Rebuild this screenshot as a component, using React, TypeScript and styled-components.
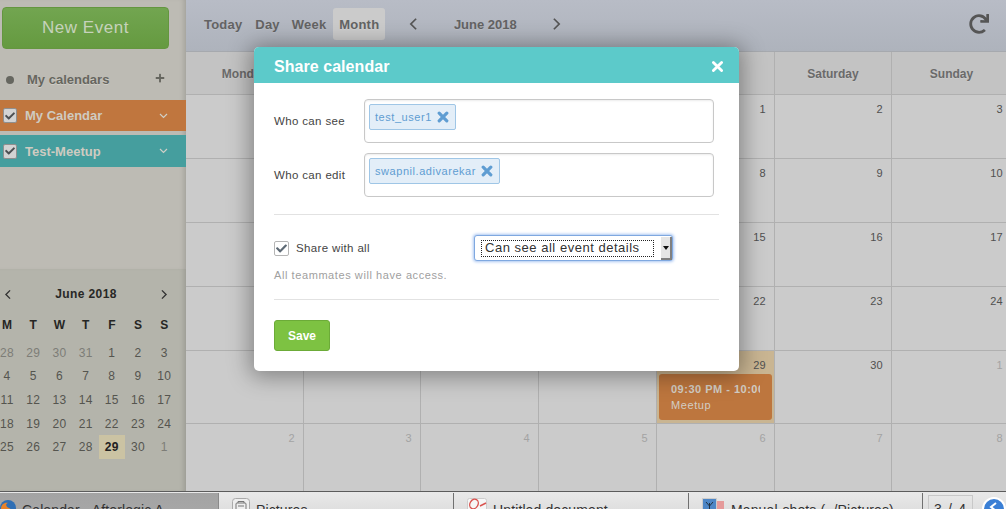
import React from "react";
import styled, { createGlobalStyle } from "styled-components";
import { FaCheck, FaPlus, FaRedo } from "react-icons/fa";

const Global = createGlobalStyle`
  html, body { margin: 0; padding: 0; width: 1006px; height: 509px; overflow: hidden; background: #cbcbcb; }
  body { font-family: "Liberation Sans", Arial, sans-serif; }
  #root { width: 1006px; height: 509px; overflow: hidden; }
  * { box-sizing: border-box; }
`;

const Page = styled.div`
  position: relative;
  width: 1006px;
  height: 509px;
  overflow: hidden;
  display: flex;
  flex-direction: column;
`;
const Body = styled.div`
  display: flex;
  height: 491px;
  flex: none;
`;

/* ---------- sidebar ---------- */
const Sidebar = styled.aside`
  width: 186px;
  flex: none;
  display: flex;
  flex-direction: column;
`;
const SideTop = styled.div`
  height: 269px;
  flex: none;
  padding-top: 7px;
  background: #bdbbb4;
  box-shadow: inset -5px 0 5px -3px rgba(0, 0, 0, 0.14);
`;
const NewEvent = styled.div`
  width: 167px;
  height: 42px;
  margin-left: 2px;
  border-radius: 4px;
  border: 1px solid #64963f;
  background: linear-gradient(#72a550, #659a40);
  color: #c6d2bb;
  font-size: 17px;
  letter-spacing: 0.55px;
  display: flex;
  align-items: center;
  justify-content: center;
`;
const CalHead = styled.div`
  height: 30px;
  margin-top: 15px;
  padding: 0 21px 0 6px;
  display: flex;
  align-items: center;
  color: #66665f;
  font-size: 13px;
  font-weight: 700;
  text-shadow: 0 1px 0 #cfcdc6;
`;
const Dot = styled.span`
  width: 8px;
  height: 8px;
  border-radius: 50%;
  background: #66665f;
  margin: 2px 13px 0 0;
`;
const HeadLabel = styled.span`
  flex: 1;
`;
const PlusIcon = styled(FaPlus)`
  width: 10px;
  height: 10px;
  margin-top: -3px;
`;
const CalRow = styled.div<{ $bg: string; $h: number; $mt: number }>`
  height: ${(p) => p.$h}px;
  margin-top: ${(p) => p.$mt}px;
  background: ${(p) => p.$bg};
  display: flex;
  align-items: center;
  padding-left: 3px;
  color: #cfcbc1;
  font-size: 13px;
  font-weight: 700;
`;
const RowLabel = styled.span`
  margin-left: 8px;
  flex: 1;
`;
const SideCheck = styled.span`
  width: 14px;
  height: 15px;
  border: 1px solid #8f8f8f;
  border-radius: 2px;
  background: #d3d3d3;
  color: #4c4f52;
  display: flex;
  align-items: center;
  justify-content: center;
  font-size: 10px;
`;
const Chevron = styled.svg`
  width: 9px;
  height: 6px;
  margin-right: 18px;
`;
const Mini = styled.div`
  flex: 1;
  padding-top: 15px;
  background: #b4b4ab;
  box-shadow: inset -5px 0 5px -3px rgba(0, 0, 0, 0.14);
  display: flex;
  flex-direction: column;
`;
const MiniHead = styled.div`
  width: 172px;
  height: 20px;
  display: flex;
  align-items: center;
  justify-content: space-between;
  padding: 0 4px;
  font-size: 12px;
  font-weight: 700;
  letter-spacing: 0.4px;
  color: #282826;
`;
const MiniGrid = styled.div`
  margin-top: 13px;
  display: grid;
  grid-template-columns: repeat(7, 26.2px);
  grid-auto-rows: 23.7px;
  margin-left: -6px;
`;
const Wk = styled.div`
  display: flex;
  align-items: center;
  justify-content: center;
  font-size: 12px;
  font-weight: 700;
  color: #262624;
  height: 16px;
`;
const Day = styled.div<{ $mute?: boolean; $today?: boolean }>`
  display: flex;
  align-items: center;
  justify-content: center;
  font-size: 12px;
  letter-spacing: 0.3px;
  color: ${(p) => (p.$today ? "#222" : p.$mute ? "#7d7d77" : "#55554f")};
  font-weight: ${(p) => (p.$today ? 700 : 400)};
  background: ${(p) => (p.$today ? "#cbc3a3" : "transparent")};
`;

/* ---------- calendar ---------- */
const Main = styled.main`
  flex: 1;
  min-width: 0;
  display: flex;
  flex-direction: column;
`;
const Toolbar = styled.header`
  height: 52px;
  flex: none;
  background: linear-gradient(#b8bcc6, #aeb3bc);
  border-bottom: 1px solid #a6a9ae;
  display: flex;
  align-items: center;
  padding: 0 17px 3px 18px;
  color: #636363;
  font-size: 13px;
  font-weight: 700;
  letter-spacing: 0.2px;
  text-shadow: 0 1px 0 rgba(255, 255, 255, 0.12);
`;
const ViewBtn = styled.span<{ $gap: number }>`
  margin-right: ${(p) => p.$gap}px;
`;
const ActiveBtn = styled.span`
  width: 52px;
  height: 32px;
  display: flex;
  align-items: center;
  justify-content: center;
  border-radius: 3px;
  background: #cbcbcb;
`;
const Period = styled.div`
  display: flex;
  align-items: center;
  margin-left: 24px;
  letter-spacing: 0;
  flex: 1;
`;
const PeriodLabel = styled.span`
  width: 134px;
  text-align: center;
`;
const Refresh = styled(FaRedo)`
  width: 20px;
  height: 20px;
  margin-bottom: 1px;
  color: #555;
`;
const Grid = styled.div`
  display: grid;
  grid-template-columns: 118px 117px 118px 118px 118px 117px 120px;
  grid-template-rows: 43px 64px 64px 64px 64px 73px 68px;
  width: 826px;
`;
const HeadCell = styled.div`
  background: #c3c3c3;
  border-right: 1px solid #b0b0b0;
  border-bottom: 1px solid #b0b0b0;
  display: flex;
  align-items: center;
  justify-content: center;
  padding-top: 1px;
  color: #6a6a6a;
  font-size: 12px;
  font-weight: 700;
  text-shadow: 0 1px 0 rgba(255, 255, 255, 0.15);
`;
const Cell = styled.div<{ $mute?: boolean; $today?: boolean }>`
  background: ${(p) => (p.$today ? "#c9b592" : "#cbcbcb")};
  border-right: 1px solid #b0b0b0;
  border-bottom: 1px solid #b0b0b0;
  display: flex;
  flex-direction: column;
  align-items: flex-end;
  padding: 8px 8px 0 2px;
  font-size: 11px;
  letter-spacing: 0.3px;
  color: ${(p) => (p.$mute ? "#a3a3a3" : "#505050")};
`;
const Event = styled.div`
  align-self: stretch;
  height: 46px;
  margin: 3px -6px 0 0;
  background: #bd763e;
  border-radius: 3px;
  padding: 9px 12px 0 12px;
  color: #d2cdc4;
  font-size: 11px;
  white-space: nowrap;
  letter-spacing: 0.6px;
  overflow: hidden;
`;
const EventTime = styled.b`
  display: block;
  margin-bottom: 4px;
  overflow: hidden;
  letter-spacing: 0.5px;
`;

/* ---------- modal ---------- */
const Modal = styled.section`
  position: absolute;
  left: 254px;
  top: 47px;
  width: 485px;
  height: 324px;
  background: #fff;
  border-radius: 5px;
  box-shadow: 0 2px 22px 4px rgba(0, 0, 0, 0.35);
  overflow: hidden;
`;
const ModalHead = styled.div`
  height: 36px;
  background: #5ccaca;
  color: #fff;
  display: flex;
  align-items: center;
  justify-content: space-between;
  padding: 3px 15px 0 20px;
  font-size: 16px;
  font-weight: 700;
  letter-spacing: 0.05px;
`;
const ModalBody = styled.div`
  padding: 16px 20px 0;
  color: #444;
  font-size: 11.5px;
  letter-spacing: 0.35px;
`;
const FieldRow = styled.div`
  display: flex;
  align-items: center;
  height: 44px;
  margin-bottom: 10px;
`;
const FieldLabel = styled.label`
  width: 90px;
  flex: none;
`;
const TokenBox = styled.div`
  width: 350px;
  height: 44px;
  border: 1px solid #c8c8c8;
  border-radius: 4px;
  box-shadow: inset 0 1px 2px rgba(0, 0, 0, 0.08);
  padding: 4px;
  display: flex;
  align-items: flex-start;
`;
const Token = styled.span`
  height: 26px;
  background: #e3eef8;
  border: 1px solid #9fc6e6;
  border-radius: 2px;
  color: #5f9dd2;
  font-size: 11px;
  display: flex;
  align-items: center;
  padding: 0 6px 0 5px;
  gap: 5px;
  letter-spacing: 0.55px;
`;
const Rule = styled.hr<{ $mt?: number }>`
  border: 0;
  border-top: 1px solid #e2e2e2;
  margin: ${(p) => p.$mt ?? 0}px 0 0;
  width: 445px;
`;
const ShareRow = styled.div`
  display: flex;
  align-items: center;
  height: 26px;
  margin-top: 20px;
`;
const ShareLabel = styled.label`
  display: flex;
  align-items: center;
  gap: 7px;
  width: 200px;
`;
const ModalCheck = styled.span`
  width: 15px;
  height: 15px;
  border: 1px solid #b5b5b5;
  border-radius: 2px;
  color: #5e6a75;
  display: flex;
  align-items: center;
  justify-content: center;
  font-size: 11px;
`;
const SelectBox = styled.div`
  width: 199px;
  height: 26px;
  border: 1px solid #7fa8e0;
  border-radius: 3px;
  box-shadow: 0 0 3px 1px #a9c6f2;
  background: #fff;
  display: flex;
  align-items: stretch;
  padding: 1px 0 0 6px;
`;
const SelectText = styled.span`
  flex: 1;
  margin: 3px 7px 3px 0;
  border: 1px dotted #222;
  display: flex;
  align-items: center;
  padding: 0 0 2px 3px;
  color: #333;
  font-size: 13px;
  letter-spacing: 0.52px;
  white-space: nowrap;
`;
const SelectArrow = styled.span`
  width: 11px;
  flex: none;
  background: #e6e6e6;
  border-right: 2px solid #808080;
  border-bottom: 2px solid #808080;
  display: flex;
  align-items: center;
  justify-content: center;
  &::after {
    content: "";
    border-style: solid;
    border-width: 4px 3px 0;
    border-color: #111 transparent transparent;
  }
`;
const Help = styled.p`
  margin: 7px 0 16px;
  color: #a0a0a0;
  font-size: 11px;
  letter-spacing: 0.58px;
  line-height: 15px;
`;
const Save = styled.button`
  display: block;
  margin-top: 20px;
  width: 56px;
  height: 31px;
  background: #7dc242;
  border: 1px solid #6cab38;
  border-radius: 3px;
  color: #fff;
  font: 700 12px "Liberation Sans", Arial, sans-serif;
  padding: 0;
`;

/* ---------- taskbar ---------- */
const Taskbar = styled.footer`
  height: 18px;
  flex: none;
  border-top: 1px solid #5c5c5c;
  padding-top: 1px;
  background: linear-gradient(#e9e9e9, #dfdfdf);
  display: flex;
  overflow: hidden;
  color: #333;
  font-size: 14px;
  letter-spacing: 0.12px;
`;
const TaskItem = styled.div<{ $w: number; $active?: boolean }>`
  width: ${(p) => p.$w}px;
  height: 30px;
  flex: none;
  display: flex;
  align-items: flex-start;
  gap: 6px;
  padding: ${(p) => (p.$active ? "7px 0 0 0" : "5px 0 0 13px")};
  white-space: nowrap;
  background: ${(p) => (p.$active ? "linear-gradient(#a3a3a3,#a9a9a9)" : "transparent")};
  border-right: 1px solid ${(p) => (p.$active ? "#8a8a8a" : "#707070")};
`;
const TaskText = styled.span<{ $dy: number }>`
  margin-top: ${(p) => p.$dy}px;
`;
const Pager = styled.div`
  margin: 2px 0 0 5px;
  width: 46px;
  height: 30px;
  border: 1px solid #c8c8c8;
  text-align: center;
  padding-top: 5px;
  letter-spacing: 1.2px;
`;
const Globe = styled.svg`
  width: 24px;
  height: 24px;
  margin: 4px 0 0 9px;
  flex: none;
`;
const TaskGlyph = styled.svg`
  flex: none;
`;

const days = ["Monday","Tuesday","Wednesday","Thursday","Friday","Saturday","Sunday"];
const weeks: { n: number; m?: boolean }[][] = [
  [28,29,30,31,1,2,3].map((n,i)=>({n,m:i<4})),
  [4,5,6,7,8,9,10].map((n)=>({n})),
  [11,12,13,14,15,16,17].map((n)=>({n})),
  [18,19,20,21,22,23,24].map((n)=>({n})),
  [25,26,27,28,29,30,1].map((n,i)=>({n,m:i===6})),
];
const big = [...weeks, [2,3,4,5,6,7,8].map((n)=>({n,m:true}))];

const ChevDown = () => (
  <Chevron viewBox="0 0 9 6"><polyline points="1,1 4.5,4.5 8,1" fill="none" stroke="#cfcfc7" strokeWidth="1.2" /></Chevron>
);
const Arrow = ({ dir, w, h, sw, color }: { dir: "l" | "r"; w: number; h: number; sw: number; color: string }) => (
  <svg width={w} height={h} viewBox="0 0 10 16">
    <polyline points={dir === "l" ? "8,2 2,8 8,14" : "2,2 8,8 2,14"} fill="none" stroke={color} strokeWidth={sw} />
  </svg>
);
const XIcon = ({ size, sw, color }: { size: number; sw: number; color: string }) => (
  <svg width={size} height={size} viewBox="0 0 12 12">
    <path d="M2.2 2.2 L9.8 9.8 M9.8 2.2 L2.2 9.8" stroke={color} strokeWidth={sw} fill="none" strokeLinecap="round" />
  </svg>
);
const FoxIcon = () => (
  <TaskGlyph width="16" height="16" viewBox="0 0 16 16">
    <circle cx="8" cy="8" r="8" fill="#2f6fb5" />
    <path d="M1 9 C1 4 5 2 8 3 C5 4 6 7 9 8 C12 9 12 13 8 16 C4 16 1 13 1 9Z" fill="#e8832a" />
  </TaskGlyph>
);
const PicIcon = () => (
  <TaskGlyph width="18" height="20" viewBox="0 0 18 20">
    <rect x="0.5" y="0.5" width="17" height="19" rx="3" fill="#eee" stroke="#aaa" />
    <rect x="4" y="5" width="10" height="7" rx="1" fill="none" stroke="#777" />
    <path d="M6 5V3.5H12V5M6 8H12" stroke="#777" fill="none" />
  </TaskGlyph>
);
const DocIcon = () => (
  <TaskGlyph width="20" height="20" viewBox="0 0 20 20">
    <rect x="0.5" y="0.5" width="19" height="19" rx="2" fill="#f6f6f6" stroke="#ccc" />
    <ellipse cx="7" cy="6" rx="4" ry="5" fill="none" stroke="#d9534f" strokeWidth="1.4" transform="rotate(30 7 6)" />
    <path d="M13 8L19 5" stroke="#d9534f" strokeWidth="1.4" />
  </TaskGlyph>
);
const PhotoIcon = () => (
  <TaskGlyph width="23" height="20" viewBox="0 0 23 20">
    <rect x="14" y="3" width="8" height="12" fill="#e59a9a" />
    <rect x="0.5" y="0.5" width="14" height="19" fill="#4d86c6" stroke="#ccc" />
    <rect x="1" y="12" width="13" height="7" fill="#111" />
    <path d="M7.5 13V5M7.5 8L4 4M7.5 8L11 4" stroke="#234" fill="none" />
  </TaskGlyph>
);

export default function App() {
  return (
    <Page>
      <Global />
      <Body>
        <Sidebar>
          <SideTop>
            <NewEvent>New Event</NewEvent>
            <CalHead>
              <Dot />
              <HeadLabel>My calendars</HeadLabel>
              <PlusIcon />
            </CalHead>
            <CalRow $bg="#c0763e" $h={31} $mt={6}>
              <SideCheck><FaCheck /></SideCheck>
              <RowLabel>My Calendar</RowLabel>
              <ChevDown />
            </CalRow>
            <CalRow $bg="#459e9e" $h={32} $mt={4}>
              <SideCheck><FaCheck /></SideCheck>
              <RowLabel>Test-Meetup</RowLabel>
              <ChevDown />
            </CalRow>
          </SideTop>
          <Mini>
            <MiniHead>
              <Arrow dir="l" w={8} h={11} sw={2} color="#333" />
              <span>June 2018</span>
              <Arrow dir="r" w={8} h={11} sw={2} color="#333" />
            </MiniHead>
            <MiniGrid>
              {["M","T","W","T","F","S","S"].map((d, i) => <Wk key={i}>{d}</Wk>)}
              {weeks.flat().map((d, i) => (
                <Day key={i} $mute={d.m} $today={d.n === 29 && i > 20}>{d.n}</Day>
              ))}
            </MiniGrid>
          </Mini>
        </Sidebar>
        <Main>
          <Toolbar>
            <ViewBtn $gap={13}>Today</ViewBtn>
            <ViewBtn $gap={12}>Day</ViewBtn>
            <ViewBtn $gap={7}>Week</ViewBtn>
            <ActiveBtn>Month</ActiveBtn>
            <Period>
              <Arrow dir="l" w={9} h={14} sw={2} color="#555" />
              <PeriodLabel>June 2018</PeriodLabel>
              <Arrow dir="r" w={9} h={14} sw={2} color="#555" />
            </Period>
            <Refresh />
          </Toolbar>
          <Grid>
            {days.map((d) => <HeadCell key={d}>{d}</HeadCell>)}
            {big.flat().map((d, i) => {
              const today = i === 32;
              return (
                <Cell key={i} $mute={d.m} $today={today}>
                  {d.n}
                  {today && (
                    <Event>
                      <EventTime>09:30 PM - 10:00 PM</EventTime>
                      Meetup
                    </Event>
                  )}
                </Cell>
              );
            })}
          </Grid>
        </Main>
      </Body>
      <Taskbar>
        <TaskItem $w={219} $active><FoxIcon /><TaskText $dy={2}>Calendar - Afterlogic A</TaskText></TaskItem>
        <TaskItem $w={235}><PicIcon /><TaskText $dy={4}>Pictures</TaskText></TaskItem>
        <TaskItem $w={235}><DocIcon /><TaskText $dy={4}>Untitled document</TaskText></TaskItem>
        <TaskItem $w={234}><PhotoIcon /><TaskText $dy={4}>Manual-shots (~/Pictures)</TaskText></TaskItem>
        <Pager>3 / 4</Pager>
        <Globe viewBox="0 0 24 24">
          <circle cx="12" cy="12" r="11" fill="#3a7fd5" stroke="#fff" strokeWidth="2" />
          <path d="M14 6L9 10L14 14" fill="none" stroke="#fff" strokeWidth="2" />
        </Globe>
      </Taskbar>
      <Modal>
        <ModalHead>
          Share calendar
          <XIcon size={13} sw={2.6} color="#fff" />
        </ModalHead>
        <ModalBody>
          <FieldRow>
            <FieldLabel>Who can see</FieldLabel>
            <TokenBox><Token>test_user1 <XIcon size={12} sw={3.2} color="#5f9dd2" /></Token></TokenBox>
          </FieldRow>
          <FieldRow>
            <FieldLabel>Who can edit</FieldLabel>
            <TokenBox><Token>swapnil.adivarekar <XIcon size={12} sw={3.2} color="#5f9dd2" /></Token></TokenBox>
          </FieldRow>
          <Rule $mt={17} />
          <ShareRow>
            <ShareLabel><ModalCheck><FaCheck /></ModalCheck>Share with all</ShareLabel>
            <SelectBox>
              <SelectText>Can see all event details</SelectText>
              <SelectArrow />
            </SelectBox>
          </ShareRow>
          <Help>All teammates will have access.</Help>
          <Rule />
          <Save>Save</Save>
        </ModalBody>
      </Modal>
    </Page>
  );
}
